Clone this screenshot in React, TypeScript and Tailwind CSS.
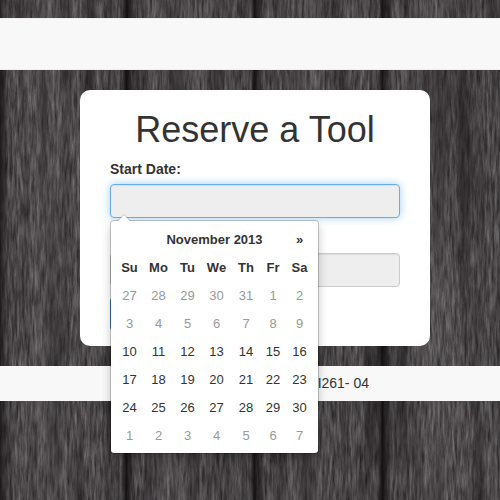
import React from "react";

const days = ["Su", "Mo", "Tu", "We", "Th", "Fr", "Sa"];
const weeks = [
  [27, 28, 29, 30, 31, 1, 2],
  [3, 4, 5, 6, 7, 8, 9],
  [10, 11, 12, 13, 14, 15, 16],
  [17, 18, 19, 20, 21, 22, 23],
  [24, 25, 26, 27, 28, 29, 30],
  [1, 2, 3, 4, 5, 6, 7],
];

const isDisabled = (week: number) => week < 2 || week === 5;

function Wood() {
  return (
    <svg className="absolute inset-0 h-full w-full" aria-hidden="true">
      <defs>
        <filter id="grain" x="0" y="0" width="100%" height="100%" colorInterpolationFilters="sRGB">
          <feTurbulence type="fractalNoise" baseFrequency="0.4 0.045" numOctaves="4" seed="8" />
          <feColorMatrix values="0.38 0.14 0 0 0.062  0.38 0.14 0 0 0.046  0.38 0.14 0 0 0.052  0 0 0 0 1" />
        </filter>
        <filter id="streaks" x="0" y="0" width="100%" height="100%" colorInterpolationFilters="sRGB">
          <feTurbulence type="fractalNoise" baseFrequency="0.07 0.004" numOctaves="2" seed="21" />
          <feColorMatrix values="0 0 0 0 0.1  0 0 0 0 0.085  0 0 0 0 0.09  1.5 0 0 0 -0.6" />
        </filter>
        <linearGradient id="plank">
          <stop offset="0" stopColor="#0c090b" stopOpacity="0.9" />
          <stop offset="0.03" stopColor="#151113" stopOpacity="0.6" />
          <stop offset="0.08" stopColor="#151113" stopOpacity="0.05" />
          <stop offset="0.4" stopColor="#777274" stopOpacity="0.12" />
          <stop offset="0.7" stopColor="#151113" stopOpacity="0.05" />
          <stop offset="0.97" stopColor="#151113" stopOpacity="0.1" />
          <stop offset="1" stopColor="#0c090b" stopOpacity="0.8" />
        </linearGradient>
        <pattern id="planks" x="-2" width="128" height="500" patternUnits="userSpaceOnUse">
          <rect width="128" height="500" fill="url(#plank)" />
        </pattern>
      </defs>
      <rect width="100%" height="100%" filter="url(#grain)" />
      <rect width="100%" height="100%" filter="url(#streaks)" />
      <rect width="100%" height="100%" fill="url(#planks)" />
    </svg>
  );
}

function Calendar() {
  return (
    <div className="absolute top-full left-0 z-10 mt-0.5 rounded border border-black/20 bg-white bg-clip-padding px-1 pt-[5px] pb-[3px] text-[13px] leading-5 shadow-[0_5px_10px_rgba(0,0,0,0.2)]">
      <span className="absolute -top-[7px] left-1.5 border-x-7 border-b-7 border-x-transparent border-b-black/20" />
      <span className="absolute -top-1.5 left-[7px] border-x-6 border-b-6 border-x-transparent border-b-white" />
      <table className="w-[199px] table-fixed border-collapse text-center">
        <colgroup>
          <col className="w-[29px]" />
          <col className="w-[29px]" />
          <col className="w-[29px]" />
          <col className="w-[29px]" />
          <col className="w-[30px]" />
          <col className="w-[24px]" />
          <col className="w-[29px]" />
        </colgroup>
        <thead>
          <tr className="h-7">
            <th />
            <th colSpan={5} className="font-bold">November 2013</th>
            <th><button type="button" aria-label="Next month" className="font-bold">»</button></th>
          </tr>
          <tr className="h-7">
            {days.map((day) => <th key={day} className="font-bold">{day}</th>)}
          </tr>
        </thead>
        <tbody>
          {weeks.map((week, row) => (
            <tr key={row} className={isDisabled(row) ? "h-7 text-[#999999]" : "h-7"}>
              {week.map((day) => <td key={day}>{day}</td>)}
            </tr>
          ))}
        </tbody>
      </table>
    </div>
  );
}

export default function App() {
  return (
    <div className="relative isolate min-h-screen overflow-hidden bg-[#3b3739] pt-[18px] font-['Liberation_Sans',Arial,sans-serif] text-sm leading-5 text-[#333333]">
      <div className="absolute inset-0 -z-10"><Wood /></div>
      <nav className="h-[52px] border-y border-[#eeeeee] bg-[#f8f8f8]" />
      <main className="relative z-10 mt-5 mr-[70px] ml-20 rounded-[10px] bg-white px-[30px] pt-5 pb-[15px]">
        <h1 className="text-center text-4xl leading-10">Reserve a Tool</h1>
        <form>
          <label htmlFor="start" className="mt-[9px] mb-[5px] block font-bold">Start Date:</label>
          <div className="relative">
            <input id="start" readOnly className="block h-[34px] w-full rounded border border-[#66afe9] bg-[#eeeeee] px-3 shadow-[inset_0_1px_1px_rgba(0,0,0,0.075),0_0_8px_rgba(102,175,233,0.6)] outline-none" />
            <Calendar />
          </div>
          <input aria-label="End date" readOnly className="mt-[35px] block h-[34px] w-full rounded border border-[#cccccc] bg-[#eeeeee] px-3 shadow-[inset_0_1px_1px_rgba(0,0,0,0.075)] outline-none" />
          <button type="submit" aria-label="Reserve" className="mt-[10px] block h-[34px] w-20 rounded border border-[#357ebd] bg-[#428bca]" />
        </form>
      </main>
      <footer className="mt-5 flex h-[35px] justify-center bg-[#f8f8f8] pt-[7px]">
        <p className="w-[238px] text-right">I261- 04</p>
      </footer>
    </div>
  );
}
